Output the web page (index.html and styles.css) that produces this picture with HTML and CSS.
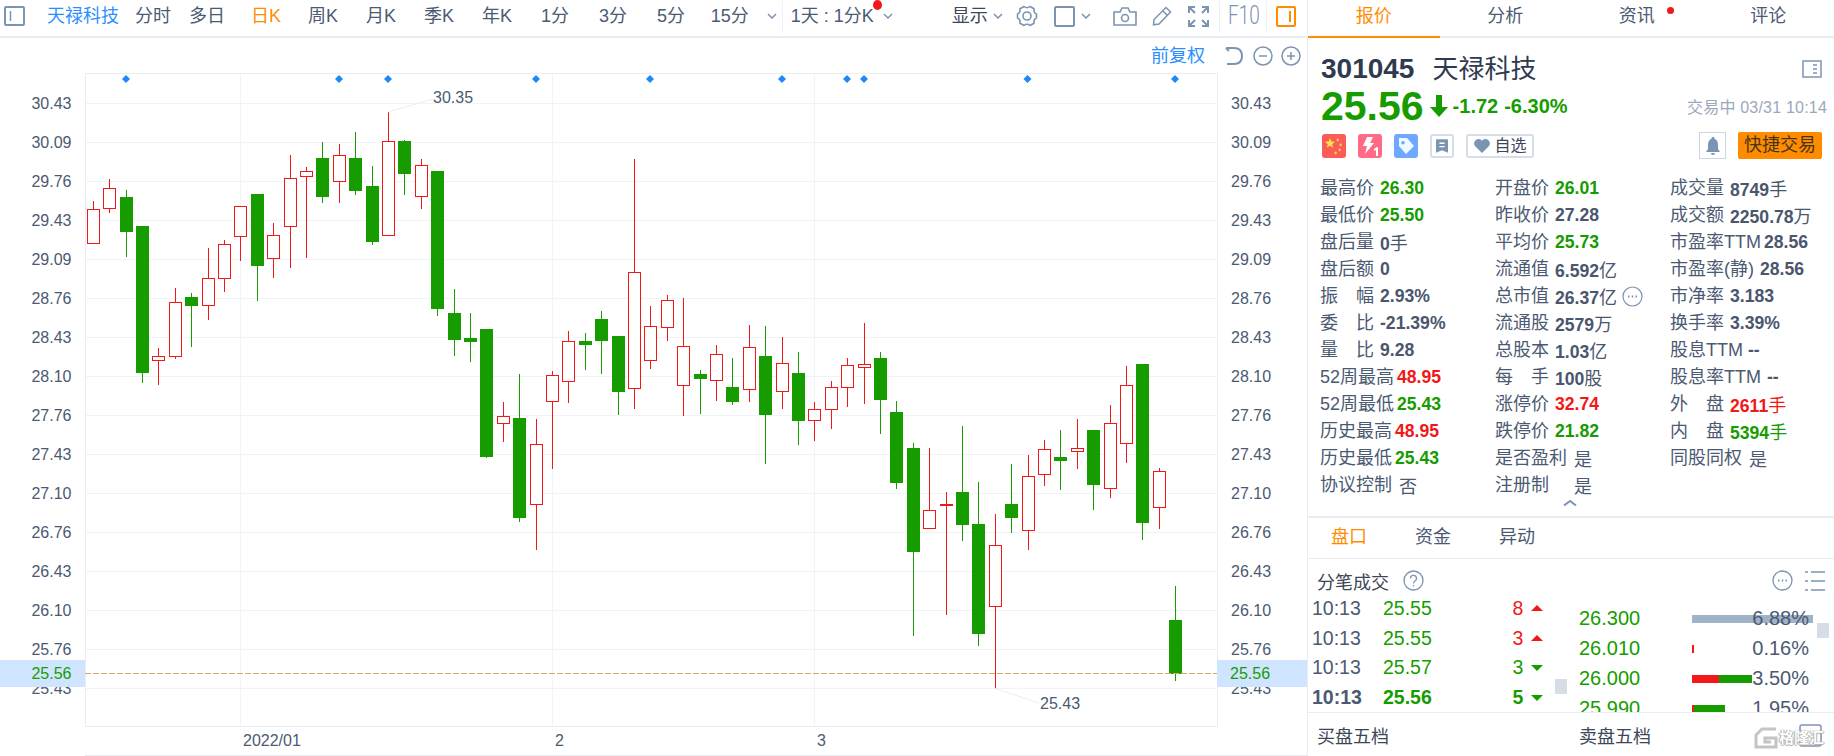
FILE: index.html
```html
<!DOCTYPE html>
<html lang="zh-CN">
<head>
<meta charset="utf-8">
<title>天禄科技 K线</title>
<link rel="stylesheet" href="styles.css">
</head>
<body>
<div class="app">
  <main class="pane">
    <header class="toolbar">
      <svg class="ic ic-panel" viewBox="0 0 21 20"><rect x="1" y="1" width="19" height="18" rx="1"/><path d="M6.5 5v10"/></svg>
      <span class="tb name">天禄科技</span>
      <span class="tb near">分时</span>
      <span class="tb near2">多日</span>
      <span class="tb active">日K</span>
      <span class="tb week">周K</span>
      <span class="tb">月K</span>
      <span class="tb">季K</span>
      <span class="tb">年K</span>
      <span class="tb num1">1分</span>
      <span class="tb num3">3分</span>
      <span class="tb num3">5分</span>
      <span class="tb num15">15分</span>
      <svg class="ic chev after15" viewBox="0 0 10 6"><path d="M1 1l4 4 4-4"/></svg>
      <span class="tb-div div1"></span>
      <span class="tb custom">1天 : 1分K<i class="reddot"></i></span>
      <svg class="ic chev after-custom" viewBox="0 0 10 6"><path d="M1 1l4 4 4-4"/></svg>
      <span class="tb show">显示</span>
      <svg class="ic chev after-show" viewBox="0 0 10 6"><path d="M1 1l4 4 4-4"/></svg>
      <svg class="ic ic-gear" viewBox="0 0 22 22"><path d="M8 1.5Q11 4 14 1.500L18 3.800Q17.500 7.500 20.500 9.300V12.700Q17.500 14.500 18 18.200L14 20.500Q11 18 8 20.500L4 18.200Q4.500 14.500 1.500 12.700V9.300Q4.500 7.500 4 3.800Z"/><circle cx="11" cy="11" r="4"/></svg>
      <svg class="ic ic-square" viewBox="0 0 21 21"><rect x="1" y="1" width="19" height="19" rx="1"/></svg>
      <svg class="ic chev after-square" viewBox="0 0 10 6"><path d="M1 1l4 4 4-4"/></svg>
      <svg class="ic ic-camera" viewBox="0 0 24 19"><path d="M1 5H7L9 1H15L17 5H23V18H1Z"/><circle cx="12" cy="11" r="3.500"/></svg>
      <svg class="ic ic-pencil" viewBox="0 0 20 20"><path d="M14 1.500L18.500 6 7 18 1.500 18.800 2 13.500ZM11 5L15.500 9.500"/></svg>
      <svg class="ic ic-full" viewBox="0 0 21 21"><path d="M1 7V1H7M20 7V1H14M1 14V20H7M20 14V20H14M2 2L7 7M19 2L14 7M2 19L7 14M19 19L14 14"/></svg>
      <span class="tb-div div2"></span>
      <span class="f10">F10</span>
      <span class="tb-div div3"></span>
      <svg class="ic ic-side" viewBox="0 0 20 21"><rect x="1" y="1" width="18" height="19" rx="1"/><path d="M14 5v11"/></svg>
    </header>
    <div class="subbar">
      <span class="adjust">前复权</span>
      <svg class="ic ic-undo" viewBox="0 0 18 18"><path d="M1 1H9Q17 1 17 9T9 17H2M1 1L4 4"/></svg>
      <svg class="ic ic-round" viewBox="0 0 20 20"><circle cx="10" cy="10" r="9"/><path d="M6 10h8"/></svg>
      <svg class="ic ic-round" viewBox="0 0 20 20"><circle cx="10" cy="10" r="9"/><path d="M6 10h8M10 6v8"/></svg>
    </div>
    <svg id="chart" class="chart" viewBox="0 73 1307 683"></svg>
  </main>

  <aside class="side">
    <nav class="tabs">
      <span class="tab on">报价</span>
      <span class="tab">分析</span>
      <span class="tab">资讯<i class="tabdot"></i></span>
      <span class="tab">评论</span>
    </nav>

    <div class="title">
      <strong class="code">301045</strong>
      <span class="cname">天禄科技</span>
      <svg class="ic ic-doc" viewBox="0 0 20 18"><rect x="1" y="1" width="18" height="16"/><path d="M11 5h4M11 9h4M11 13h4"/></svg>
    </div>

    <div class="quote">
      <span class="price">25.56</span>
      <svg class="arrow" viewBox="0 0 18 22"><path d="M6 0h6v12h6L9 22 0 12h6z"/></svg>
      <span class="chg">-1.72</span>
      <span class="chg pct">-6.30%</span>
      <span class="time">交易中 03/31 10:14</span>
    </div>

    <div class="actions">
      <svg class="badge" viewBox="0 0 24 24"><rect width="24" height="24" rx="3" fill="#fa5c58"/><path fill="#ffe14d" d="M8 4l1.400 3.600 3.600.2-2.800 2.400 1 3.600L8 11.800l-3.200 2 1-3.600L3 7.800l3.600-.2zM15 4l.8 1 1.200-.2-.6 1.100.7 1-1.200-.2-.8 1-.1-1.300-1.100-.4 1.100-.6zM18 9l.8 1 1.200-.2-.6 1.100.7 1-1.200-.2-.8 1-.1-1.300-1.100-.4 1.100-.6zM17 14l.8 1 1.200-.2-.6 1.100.7 1-1.200-.2-.8 1-.1-1.300-1.100-.4 1.100-.6zM13 17l.8 1 1.200-.2-.6 1.100.7 1-1.200-.2-.8 1-.1-1.300-1.100-.4 1.100-.6z"/></svg>
      <svg class="badge gap" viewBox="0 0 24 24"><rect width="24" height="24" rx="3" fill="#ff6a87"/><path fill="#fff" d="M9 3h6l-3 6h4L7 20l2-8H5zM16 15l3-2h1v9h-2v-6l-2 1z"/></svg>
      <svg class="badge gap" viewBox="0 0 24 24"><rect width="24" height="24" rx="3" fill="#6ea8ff"/><path fill="#eefaff" d="M5 4h8l7 8-8 8-7-8zM9 7a1.800 1.800 0 1 0 0 3.600A1.800 1.800 0 0 0 9 7z"/></svg>
      <span class="squarebtn gap"><svg viewBox="0 0 14 16"><path fill="#7b94b2" d="M1 0h12a1 1 0 0 1 1 1v15l-7-3-7 3V1a1 1 0 0 1 1-1zm3 4v1.600h6V4zm0 4v1.600h6V8z" fill-rule="evenodd"/></svg></span>
      <span class="fav"><svg viewBox="0 0 18 16"><path fill="#7b94b2" d="M9 16L1.500 8.500A4.600 4.600 0 0 1 9 3a4.600 4.600 0 0 1 7.500 5.500z"/></svg>自选</span>
      <span class="bell"><svg viewBox="0 0 14 18"><path fill="#7b94b2" d="M7 0a1.500 1.500 0 0 1 1.500 1.700C11 2.500 12 5 12 8v4l2 3H0l2-3V8c0-3 1-5.500 3.500-6.300A1.500 1.500 0 0 1 7 0zM5 16h4a2 2 0 0 1-4 0z"/></svg></span>
      <span class="trade">快捷交易</span>
    </div>

    <section class="stats">
      <div class="stat"><span class="k">最高价</span><b class="v dn">26.30</b></div>
      <div class="stat"><span class="k">开盘价</span><b class="v dn">26.01</b></div>
      <div class="stat"><span class="k">成交量</span><b class="v">8749<i>手</i></b></div>

      <div class="stat"><span class="k">最低价</span><b class="v dn">25.50</b></div>
      <div class="stat"><span class="k">昨收价</span><b class="v">27.28</b></div>
      <div class="stat"><span class="k">成交额</span><b class="v">2250.78<i>万</i></b></div>

      <div class="stat"><span class="k">盘后量</span><b class="v">0<i>手</i></b></div>
      <div class="stat"><span class="k">平均价</span><b class="v dn">25.73</b></div>
      <div class="stat"><span class="k">市盈率TTM</span><b class="v">28.56</b></div>

      <div class="stat"><span class="k">盘后额</span><b class="v">0</b></div>
      <div class="stat"><span class="k">流通值</span><b class="v">6.592<i>亿</i></b></div>
      <div class="stat"><span class="k paren">市盈率(静)</span><b class="v">28.56</b></div>

      <div class="stat"><span class="k two"><span>振</span><span>幅</span></span><b class="v">2.93%</b></div>
      <div class="stat"><span class="k">总市值</span><b class="v">26.37<i>亿</i></b>
        <svg class="more" viewBox="0 0 21 21"><circle cx="10.500" cy="10.500" r="9.500"/><path d="M6 10.500h1.500M9.750 10.500h1.500M13.500 10.500H15"/></svg></div>
      <div class="stat"><span class="k">市净率</span><b class="v">3.183</b></div>

      <div class="stat"><span class="k two"><span>委</span><span>比</span></span><b class="v">-21.39%</b></div>
      <div class="stat"><span class="k">流通股</span><b class="v">2579<i>万</i></b></div>
      <div class="stat"><span class="k">换手率</span><b class="v">3.39%</b></div>

      <div class="stat"><span class="k two"><span>量</span><span>比</span></span><b class="v">9.28</b></div>
      <div class="stat"><span class="k">总股本</span><b class="v">1.03<i>亿</i></b></div>
      <div class="stat"><span class="k wide">股息TTM</span><b class="v">--</b></div>

      <div class="stat"><span class="k">52周最高</span><b class="v up">48.95</b></div>
      <div class="stat"><span class="k two"><span>每</span><span>手</span></span><b class="v">100<i>股</i></b></div>
      <div class="stat"><span class="k paren">股息率TTM</span><b class="v">--</b></div>

      <div class="stat"><span class="k">52周最低</span><b class="v dn">25.43</b></div>
      <div class="stat"><span class="k">涨停价</span><b class="v up">32.74</b></div>
      <div class="stat"><span class="k two"><span>外</span><span>盘</span></span><b class="v up">2611<i>手</i></b></div>

      <div class="stat"><span class="k">历史最高</span><b class="v up">48.95</b></div>
      <div class="stat"><span class="k">跌停价</span><b class="v dn">21.82</b></div>
      <div class="stat"><span class="k two"><span>内</span><span>盘</span></span><b class="v dn">5394<i>手</i></b></div>

      <div class="stat"><span class="k">历史最低</span><b class="v dn">25.43</b></div>
      <div class="stat"><span class="k">是否盈利</span><span class="flag">是</span></div>
      <div class="stat"><span class="k">同股同权</span><span class="flag">是</span></div>

      <div class="stat"><span class="k">协议控制</span><span class="flag">否</span></div>
      <div class="stat"><span class="k long">注册制</span><span class="flag">是</span></div>
    </section>

    <svg class="ic collapse" viewBox="0 0 14 6"><path d="M1 5.500L7 1l6 4.500"/></svg>

    <nav class="subtabs">
      <span class="on">盘口</span>
      <span>资金</span>
      <span>异动</span>
    </nav>

    <div class="ticks-head">
      <span>分笔成交</span>
      <svg class="ic help" viewBox="0 0 21 21"><circle cx="10.500" cy="10.500" r="9.500"/><path d="M7.500 8.500a3 3 0 1 1 4.500 2.500c-1 .6-1.500 1.200-1.500 2.500"/><path d="M10.500 15v1.500"/></svg>
      <svg class="ic dots" viewBox="0 0 21 21"><circle cx="10.500" cy="10.500" r="9.500"/><path d="M6 10.500h1.500M9.750 10.500h1.500M13.500 10.500H15"/></svg>
      <svg class="ic list" viewBox="0 0 20 20"><path d="M0 1h3M6 1h14M0 10h3M6 10h14M0 19h3M6 19h14"/></svg>
    </div>

    <div class="ticks">
      <div class="trades">
        <div class="tr"><span class="t">10:13</span><span class="p dn">25.55</span><span class="n up">8</span><i class="tri tri-up"></i></div>
        <div class="tr"><span class="t">10:13</span><span class="p dn">25.55</span><span class="n up">3</span><i class="tri tri-up"></i></div>
        <div class="tr"><span class="t">10:13</span><span class="p dn">25.57</span><span class="n dn">3</span><i class="tri tri-dn"></i></div>
        <div class="tr last"><span class="t">10:13</span><span class="p dn">25.56</span><span class="n dn">5</span><i class="tri tri-dn"></i></div>
        <span class="thumb thumb-l"></span>
      </div>
      <div class="levels">
        <div class="lv"><span class="p dn">26.300</span><div class="bar"><div class="fill"><i class="neu" style="width:121px"></i></div><span class="pc">6.88%</span></div></div>
        <div class="lv"><span class="p dn">26.010</span><div class="bar"><div class="fill"><i class="red" style="width:2px"></i></div><span class="pc">0.16%</span></div></div>
        <div class="lv"><span class="p dn">26.000</span><div class="bar"><div class="fill"><i class="red" style="width:26.500px"></i><i class="grn" style="width:33.500px"></i></div><span class="pc">3.50%</span></div></div>
        <div class="lv"><span class="p dn">25.990</span><div class="bar"><div class="fill"><i class="red" style="width:2px"></i><i class="grn" style="width:31px"></i></div><span class="pc">1.95%</span></div></div>
        <span class="thumb thumb-r"></span>
      </div>
    </div>

    <div class="depth">
      <span>买盘五档</span>
      <span class="sell">卖盘五档</span>
      <svg class="ic depth-ic" viewBox="0 0 23 23"><rect x="1" y="1" width="21" height="21" rx="2"/></svg>
    </div>

    <div class="watermark">
      <svg viewBox="0 0 24 22"><path d="M22 2H8L2 8v12h20v-9H11v4h6" /></svg>
      <span>格隆汇</span>
    </div>
  </aside>
</div>
<script src="chart.js"></script>
</body>
</html>
```

FILE: styles.css
```css
* { box-sizing: border-box; }
html, body { margin: 0; padding: 0; height: 100%; background: #fff; overflow: hidden; }
body { font-family: "Liberation Sans", "Noto Sans CJK SC", sans-serif; color: #4b5a72; font-size: 18px; }
i { font-style: normal; }

.app { display: flex; width: 1834px; height: 756px; }
.pane { width: 1307px; flex: none; display: flex; flex-direction: column; }
.side { width: 527px; flex: none; border-left: 1px solid #e9edf2; position: relative; display: flex; flex-direction: column; }

.ic { fill: none; stroke: #7b94b2; stroke-width: 2; flex: none; display: block; }

/* toolbar */
.toolbar { height: 38px; flex: none; display: flex; align-items: center; padding: 0 0 4px 4px; border-bottom: 2px solid #e9edf2; }
.tb { line-height: 24px; margin-left: 28px; white-space: nowrap; flex: none; color: #4b5a72; }
.ic-panel { width: 21px; height: 20px; }
.ic-panel path { stroke-width: 1.500; }
.tb.name { color: #2a8fff; margin-left: 22px; }
.tb.near { margin-left: 16px; }
.tb.near2 { margin-left: 18px; }
.tb.active { color: #ff8c00; margin-left: 26px; }
.tb.week { margin-left: 27px; }
.tb.num1 { margin-left: 29px; }
.tb.num3 { margin-left: 30px; }
.tb.num15 { margin-left: 25.500px; }
.chev { width: 10px; height: 6px; stroke-width: 1.500; }
.after15 { margin-left: 18px; }
.tb-div { width: 1px; height: 32px; background: #eef1f5; flex: none; margin-top: 2px; }
.div1 { margin-left: 5px; }
.tb.custom { margin-left: 8px; position: relative; }
.reddot { position: absolute; right: -8px; top: -4px; width: 9px; height: 10px; border-radius: 50%; background: #f21818; }
.after-custom { margin-left: 9px; }
.tb.show { margin-left: 59px; color: #3d4656; }
.after-show { margin-left: 5px; }
.ic-gear { width: 22px; height: 22px; margin-left: 13px; stroke-width: 1.600; }
.ic-square { width: 21px; height: 21px; margin-left: 16px; }
.after-square { margin-left: 6px; }
.ic-camera { width: 24px; height: 19px; margin-left: 22px; stroke-width: 1.600; }
.ic-pencil { width: 20px; height: 20px; margin-left: 15px; stroke-width: 1.500; }
.ic-full { width: 21px; height: 21px; margin-left: 16px; }
.div2 { margin-left: 10px; }
.f10 { width: 31px; margin-left: 8px; flex: none; font: 300 25px/24px Roboto, "Liberation Sans", sans-serif; color: #7b94b2; transform: scaleX(.76); transform-origin: left center; white-space: nowrap; }
.div3 { margin-left: 7px; }
.ic-side { width: 20px; height: 21px; margin-left: 9px; stroke: #ff8c00; }

/* chart sub bar */
.subbar { height: 35px; flex: none; display: flex; align-items: center; padding: 0 6px 0 0; justify-content: flex-end; }
.adjust { color: #2a8fff; line-height: 24px; margin-right: 20px; }
.ic-undo { width: 18px; height: 18px; margin-right: 2px; }
.ic-round { width: 20px; height: 20px; margin-left: 8px; stroke-width: 1.500; }
.chart { display: block; width: 1307px; height: 683px; flex: none; }
.chart text { font-family: "Liberation Sans", sans-serif; font-size: 16px; fill: #4b5a72; }
.chart .cur { fill: #179c00; }
.chart .g { stroke: #f0f3f7; stroke-width: 1; shape-rendering: crispEdges; }
.chart .frame { stroke: #e9edf2; stroke-width: 1; shape-rendering: crispEdges; }
.chart .c { shape-rendering: crispEdges; stroke-width: 1; }
.chart .rd { stroke: #f21818; fill: #fff; }
.chart .gn { stroke: #179c00; fill: #179c00; }
.chart .dash { stroke: #d9a868; stroke-width: 1; stroke-dasharray: 6 2; shape-rendering: crispEdges; }
.chart .leader { stroke: #e9eef2; stroke-width: 1; fill: none; }
.chart .tag { fill: #cfe5ff; }
.chart .mark { fill: #1e88f5; }

/* side tabs */
.tabs { height: 38px; flex: none; display: grid; grid-template-columns: repeat(4, 1fr); border-bottom: 2px solid #e9edf2; }
.tab { text-align: center; line-height: 33px; position: relative; height: 38px; }
.tab.on { color: #ff8c00; border-bottom: 2px solid #ff8c00; }
.tabdot { display: inline-block; position: absolute; margin: 7px 0 0 12px; width: 7px; height: 7px; border-radius: 50%; background: #f21818; }

.title { height: 38px; margin-top: 12px; flex: none; display: flex; align-items: center; padding: 0 12px 0 13px; color: #2e3a4f; }
.code { font-size: 28px; }
.cname { font-size: 26px; margin-left: 18px; line-height: 38px; }
.ic-doc { width: 20px; height: 18px; margin-left: auto; stroke-width: 1.500; }

.quote { height: 36px; flex: none; display: flex; align-items: center; padding: 0 7px 0 13px; color: #179c00; }
.price { font-size: 41px; font-weight: 700; line-height: 36px; }
.arrow { width: 18px; height: 22px; margin-left: 6px; fill: #179c00; flex: none; }
.chg { font-size: 20px; font-weight: 700; margin-left: 5px; }
.chg.pct { margin-left: 6px; }
.time { margin-left: auto; font-size: 16px; letter-spacing: .2px; color: #9aa8ba; white-space: nowrap; }

.actions { height: 27px; margin-top: 8px; flex: none; display: flex; align-items: center; padding: 0 12px 0 14px; }
.badge { width: 24px; height: 24px; flex: none; display: block; }
.gap { margin-left: 12px; }
.squarebtn { width: 24px; height: 24px; flex: none; border: 2px solid #d5dde7; border-radius: 3px; display: flex; align-items: center; justify-content: center; }
.squarebtn svg { width: 12px; height: 14px; }
.fav { width: 68px; height: 24px; margin-left: 12px; flex: none; border: 2px solid #d5dde7; border-radius: 3px; display: flex; align-items: center; justify-content: center; font-size: 16px; color: #3d4656; gap: 3px; line-height: 20px; }
.fav svg { width: 18px; height: 15px; }
.bell { width: 27px; height: 27px; margin-left: auto; flex: none; border: 1px solid #ccd6e2; display: flex; align-items: center; justify-content: center; }
.bell svg { width: 14px; height: 18px; }
.trade { width: 84px; height: 27px; margin-left: 12px; flex: none; background: #ff8c00; border-radius: 2px; color: #4a3415; text-align: center; line-height: 26px; }

/* stats */
.stats { margin-top: 15.500px; flex: none; padding-left: 12px; display: grid; grid-template-columns: repeat(3, 175px); grid-auto-rows: 27px; }
.stat { display: flex; align-items: center; white-space: nowrap; position: relative; }
.k { min-width: 57px; margin-right: 3px; line-height: 27px; }
.k.two { display: flex; justify-content: space-between; width: 54px; min-width: 54px; margin-right: 6px; }
.k.paren { margin-right: 6px; }
.k.wide { margin-right: 5px; }
.k.long { min-width: 72px; }
.v { font-size: 17.600px; color: #4a566e; }
.v i { font-size: 18px; font-weight: 400; }
.flag { margin-left: 4px; }
.up, .v.up { color: #f21818; }
.dn, .v.dn { color: #179c00; }
.more { width: 21px; height: 21px; margin-left: 5px; fill: none; stroke: #7b94b2; stroke-width: 1.200; }
.more path { stroke-width: 2; }
.collapse { width: 14px; height: 6px; margin: 1px 0 0 255px; stroke-width: 2; }

.subtabs { margin-top: 10px; height: 43px; flex: none; border-top: 2px solid #e9edf2; border-bottom: 1px solid #e9edf2; display: flex; align-items: center; padding-left: 23px; gap: 48px; }
.subtabs .on { color: #ff8c00; }
.subtabs span { line-height: 24px; margin-top: -2px; }

.ticks-head { height: 42px; flex: none; display: flex; align-items: center; padding: 2px 9px 0 9px; color: #3d4656; }
.help { width: 21px; height: 21px; margin-left: 14px; stroke-width: 1.300; }
.dots { width: 21px; height: 21px; margin-left: auto; stroke-width: 1.300; }
.dots path { stroke-width: 2; }
.list { width: 20px; height: 20px; margin-left: 12px; stroke-width: 1.300; }

.ticks { height: 112px; flex: none; overflow: hidden; display: flex; border-bottom: 1px solid #e9edf2; }
.trades { width: 271px; flex: none; margin-top: -7px; padding-left: 4px; position: relative; }
.tr { height: 29.800px; display: flex; align-items: center; font-size: 19.500px; white-space: nowrap; }
.tr .t { width: 71px; flex: none; }
.tr .p { width: 127px; flex: none; }
.tr .n { width: 20px; text-align: center; flex: none; margin-left: -2px; }
.tr.last { font-weight: 700; }
.tri { width: 0; height: 0; margin-left: 3px; border-left: 6px solid transparent; border-right: 6px solid transparent; flex: none; }
.tri-up { border-bottom: 6px solid #f21818; }
.tri-dn { border-top: 6px solid #179c00; }
.thumb { position: absolute; width: 12px; height: 15px; background: #d6dde6; }
.thumb-l { left: 247px; top: 85px; }
.thumb-r { left: 238px; top: 19px; }
.levels { flex: 1; position: relative; margin-top: 3px; }
.lv { height: 30px; display: flex; align-items: center; white-space: nowrap; font-size: 20px; }
.lv .p { width: 113px; flex: none; }
.bar { width: 117px; flex: none; position: relative; text-align: right; }
.fill { position: absolute; left: 0; top: 50%; margin-top: -4px; height: 8px; display: flex; }
.fill i { display: block; height: 8px; flex: none; }
.neu { background: #a0b2c8; }
.red { background: #f21818; }
.grn { background: #179c00; }
.pc { position: relative; }

.depth { flex: 1; display: flex; align-items: center; padding: 2px 12px 0 9px; color: #3d4656; }
.sell { margin-left: 190px; }
.depth-ic { width: 23px; height: 23px; margin-left: auto; stroke-width: 1.500; }
.watermark { position: absolute; right: 10px; bottom: 7px; display: flex; align-items: center; gap: 1px; color: #fff; font-size: 15px; font-weight: 700; text-shadow: 0 0 1px #a5a5a5, 1px 0 1px #b0b0b0, -1px 0 1px #b0b0b0, 0 1px 1px #b0b0b0; line-height: 22px; }
.watermark svg { width: 24px; height: 22px; fill: none; stroke: #c4c4c4; stroke-width: 3; }
```

FILE: chart.js
```javascript
// Candles read from the day chart: [up?, high, top, bottom, low], in 1/3 px offsets from a base y.
var R = 1, G = 0;
var sets = [
  [100, [
    [R,303,328,430,430],[R,237,265,325,338],[G,270,291,395,470],[G,378,378,818,848],
    [R,744,769,781,854],[R,564,607,769,776],[G,579,591,617,740],[R,444,535,616,659],
    [R,420,433,535,575],[R,319,319,409,482],[G,282,282,497,602],[R,369,406,475,533],
    [R,165,235,379,503],[R,201,214,229,473],[G,126,174,290,308],[R,132,166,244,308],
    [G,96,174,272,284],[G,198,258,425,434],[R,36,124,406,406],[G,120,123,221,284],
    [R,177,196,289,326],[G,213,213,626,647],[G,567,639,717,765],[G,639,714,725,785],
    [G,687,687,1070,1073],[R,906,949,970,1025],[G,822,954,1253,1265],[R,957,1033,1213,1347],
    [R,813,826,904,1106],[R,693,724,844,908],[G,699,723,734,809],[G,633,657,722,821],
    [G,708,708,875,944],[R,177,517,865,926],[R,618,679,781,806],[R,585,601,682,722],
    [R,594,739,856,947],[G,810,822,836,941],[R,735,763,841,902],[G,774,861,905,914],
    [R,675,742,868,905],[G,678,768,944,1091],[R,711,790,874,926],[G,756,819,962,1034],
    [R,906,928,961,1022],[R,843,862,928,986],[R,774,796,862,920],[R,669,793,802,911],
    [G,756,774,899,1001]
  ]],
  [340, [
    [G,183,216,428,446],[G,309,324,635,887],[R,324,511,565,565],[R,456,492,494,824],
    [G,258,456,554,602],[G,426,552,881,917],[R,522,616,799,1046],[G,372,492,533,578],
    [R,345,409,571,629],[R,300,328,403,437],[G,270,351,362,449],[R,237,325,334,386],
    [G,270,270,434,509],[R,195,250,445,473],[R,78,136,310,368],[G,72,72,548,599],
    [R,384,394,502,566],[G,738,840,999,1022]
  ]]
];
var axis = ['30.43','30.09','29.76','29.43','29.09','28.76','28.43','28.10','27.76','27.43','27.10','26.76','26.43','26.10','25.76','25.43'];
var marks = [126, 339, 388, 536, 650, 782, 847, 864, 1027.5, 1175];
var out = [];

function line(cls, x1, y1, x2, y2) {
  out.push('<line class="' + cls + '" x1="' + x1 + '" y1="' + y1 + '" x2="' + x2 + '" y2="' + y2 + '"/>');
}
function text(cls, x, y, anchor, s) {
  out.push('<text class="' + cls + '" x="' + x + '" y="' + y + '" text-anchor="' + anchor + '">' + s + '</text>');
}

// grid
axis.forEach(function (_, i) { line('g', 85, 103.5 + 39 * i, 1217, 103.5 + 39 * i); });
[240.5, 552.5, 814.5].forEach(function (x) { line('g', x, 73, x, 726); });
line('frame', 85.5, 73, 85.5, 727);
line('frame', 1217.5, 73, 1217.5, 727);
line('frame', 85, 73.5, 1217, 73.5);
line('frame', 85, 726.5, 1217, 726.5);
line('frame', 85, 755.5, 1307, 755.5);

// axis labels
axis.forEach(function (s, i) {
  var y = 103 + 39 * i + 6;
  text('', 71.5, y, 'end', s);
  text('', 1231, y, 'start', s);
});
text('', 243, 746, 'start', '2022/01');
text('', 555, 746, 'start', '2');
text('', 817, 746, 'start', '3');

// event markers
marks.forEach(function (x) {
  out.push('<path class="mark" d="M' + x + ' 75l4 4-4 4-4-4z"/>');
});

// candles
var idx = 0;
sets.forEach(function (set) {
  var base = set[0];
  set[1].forEach(function (c) {
    var x = Math.floor(93.33 + 16.4 * idx);
    var cls = c[0] === R ? 'rd' : 'gn';
    var py = function (v) { return Math.floor(v / 3) + base; };
    var hi = py(c[1]), top = py(c[2]), bot = py(c[3]), lo = py(c[4]);
    line('c ' + cls, x + 0.5, hi, x + 0.5, lo + 1);
    out.push('<rect class="c ' + cls + '" x="' + (x - 5.5) + '" y="' + (top + 0.5) + '" width="12" height="' + Math.max(bot - top, 1) + '"/>');
    idx++;
  });
});

// extremes
out.push('<path class="leader" d="M388 112L433 99"/>');
text('', 433, 103, 'start', '30.35');
out.push('<path class="leader" d="M995 688.500L1039 703"/>');
text('', 1040, 709, 'start', '25.43');

// last price
line('dash', 85, 673.5, 1217, 673.5);
out.push('<rect class="tag" x="0" y="660" width="85" height="27"/>');
out.push('<rect class="tag" x="1217" y="660" width="90" height="27"/>');
text('cur', 71.5, 679, 'end', '25.56');
text('cur', 1230, 679, 'start', '25.56');

document.getElementById('chart').innerHTML = out.join('');
```
